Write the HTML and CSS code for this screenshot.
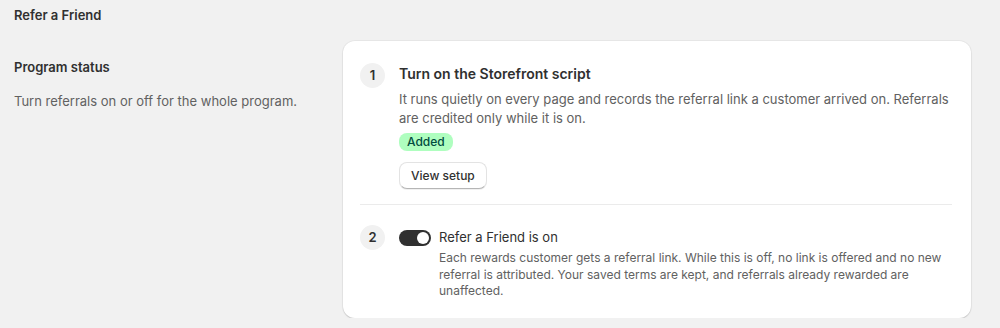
FILE: index.html
```html
<!DOCTYPE html>
<html lang="en">
<head>
    <meta charset="UTF-8">
    <meta name="viewport" content="width=device-width, initial-scale=1.0">
    <title>Refer a Friend</title>
    <link rel="stylesheet" href="styles.css">
</head>
<body>
    <h1 class="page-title">Refer a Friend</h1>

    <div class="layout">
        <div class="aside">
            <h2>Program status</h2>
            <p>Turn referrals on or off for the whole program.</p>
        </div>

        <div class="card">
            <div class="step">
                <span class="step-num">1</span>
                <div class="step-body">
                    <h3>Turn on the Storefront script</h3>
                    <p class="step-text">It runs quietly on every page and records the referral link a customer arrived on. Referrals are credited only while it is on.</p>
                    <span class="badge">Added</span>
                    <button class="btn">View setup</button>
                </div>
            </div>

            <div class="divider"></div>

            <div class="step step-two">
                <span class="step-num">2</span>
                <div class="toggle-row">
                    <span class="toggle"><span class="knob"></span></span>
                    <div class="step-body">
                        <div class="toggle-label">Refer a Friend is on</div>
                        <p class="small-text">Each rewards customer gets a referral link. While this is off, no link is offered and no new referral is attributed. Your saved terms are kept, and referrals already rewarded are unaffected.</p>
                    </div>
                </div>
            </div>
        </div>
    </div>
</body>
</html>
```

FILE: styles.css
```css
body {
    font-family: Inter, "Noto Sans", sans-serif;
    background-color: #f1f1f1;
    color: #303030;
    margin: 0;
    padding: 0 14px;
}
h1, h2, h3, p {
    margin: 0;
}
.page-title {
    font-size: 13px;
    font-weight: 600;
    line-height: 20px;
    padding-top: 5px;
}
.layout {
    display: flex;
    margin-top: 16px;
}
.aside {
    width: 329px;
    padding-top: 16px;
}
.aside h2 {
    font-size: 13px;
    font-weight: 600;
    line-height: 20px;
}
.aside p {
    font-size: 13px;
    line-height: 20px;
    color: #616161;
    margin-top: 14px;
}
.card {
    width: 628px;
    background: #fff;
    border-radius: 12px;
    box-shadow: 0 1px 0 rgba(26,26,26,0.07), 0 0 0 1px rgba(0,0,0,0.04), 0 1px 2px rgba(0,0,0,0.08);
    padding: 23px 19px 18px 17px;
    box-sizing: border-box;
}
.step {
    display: flex;
    gap: 14px;
}
.step-num {
    flex: none;
    width: 25px;
    height: 25px;
    border-radius: 50%;
    background: #f1f1f1;
    font-size: 13px;
    font-weight: 600;
    line-height: 25px;
    text-align: center;
    margin-top: -1px;
}
.step-body {
    flex: 1;
}
.step-body h3 {
    font-size: 14px;
    font-weight: 600;
    line-height: 20px;
}
.step-text {
    font-size: 13px;
    line-height: 19px;
    color: #616161;
    margin-top: 6px;
}
.badge {
    display: inline-block;
    background: #affebf;
    color: #014b40;
    font-size: 12px;
    font-weight: 550;
    line-height: 18px;
    padding: 0 8px;
    border-radius: 8px;
    margin-top: 5px;
}
.btn {
    display: block;
    font-family: inherit;
    font-size: 12px;
    font-weight: 550;
    color: #303030;
    background: #fff;
    border: 1px solid #e3e3e3;
    border-bottom-color: #b5b5b5;
    border-radius: 8px;
    padding: 5px 11px 4px;
    line-height: 16px;
    margin-top: 11px;
    box-shadow: 0 1px 0 rgba(0,0,0,0.06);
}
.divider {
    height: 1px;
    background: #ebebeb;
    margin: 15px 0 20px;
}
.step-two .step-num {
    margin-top: 0;
}
.toggle-row {
    display: flex;
    gap: 8px;
    flex: 1;
    padding-top: 2px;
}
.toggle {
    flex: none;
    width: 32px;
    height: 16px;
    border-radius: 8px;
    background: #303030;
    position: relative;
    margin-top: 3px;
}
.knob {
    position: absolute;
    right: 2px;
    top: 2px;
    width: 12px;
    height: 12px;
    border-radius: 50%;
    background: #fff;
}
.toggle-label {
    font-size: 13px;
    line-height: 20px;
}
.small-text {
    font-size: 12px;
    line-height: 16.5px;
    color: #616161;
    margin-top: 3px;
    padding-right: 10px;
}
```
